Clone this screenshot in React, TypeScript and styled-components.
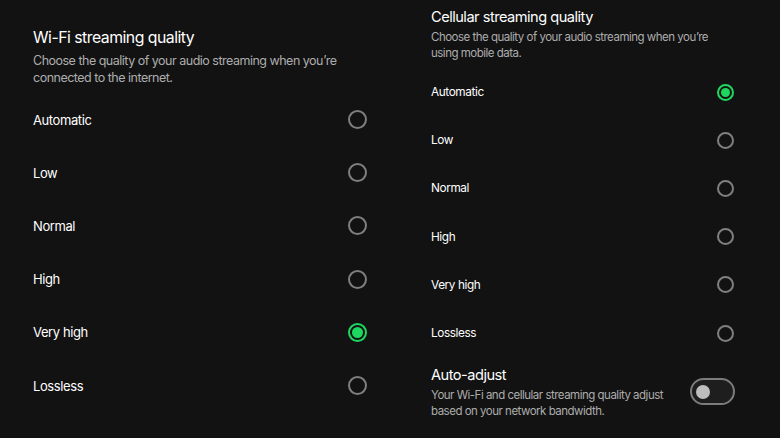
import React, { useState } from 'react';
import styled, { createGlobalStyle, css } from 'styled-components';

const GlobalStyle = createGlobalStyle`
  html, body {
    margin: 0;
    padding: 0;
    background: #121212;
  }
  body {
    font-family: Inter, "Noto Sans", sans-serif;
    color: #ffffff;
  }
`;

type Size = 'large' | 'small';

const qualityOptions = ['Automatic', 'Low', 'Normal', 'High', 'Very high', 'Lossless'];

const Page = styled.div`
  display: flex;
  width: 780px;
  height: 438px;
  overflow: hidden;
  background: #121212;
`;

const Column = styled.div<{ $size: Size }>`
  display: flex;
  flex-direction: column;
  ${(p) =>
    p.$size === 'large'
      ? css`
          width: 334px;
          padding: 28px 0 0 33px;
        `
      : css`
          width: 303px;
          padding: 8px 0 0 64px;
        `}
`;

const Title = styled.div<{ $size: Size }>`
  font-size: ${(p) => (p.$size === 'large' ? '15.8px' : '14.6px')};
  line-height: ${(p) => (p.$size === 'large' ? '20px' : '18px')};
  font-weight: 400;
  color: #ffffff;
  letter-spacing: -0.5px;
`;

const Desc = styled.div<{ $size: Size }>`
  font-size: ${(p) => (p.$size === 'large' ? '12.5px' : '11.5px')};
  line-height: ${(p) => (p.$size === 'large' ? '17px' : '16px')};
  color: #adadad;
  letter-spacing: -0.5px;
  margin-top: ${(p) => (p.$size === 'large' ? '4px' : '3px')};
`;

const List = styled.div`
  display: flex;
  flex-direction: column;
  margin-top: 7px;
`;

const Row = styled.label<{ $size: Size }>`
  display: flex;
  align-items: center;
  justify-content: space-between;
  height: ${(p) => (p.$size === 'large' ? '53.2px' : '48.2px')};
  cursor: pointer;
`;

const Label = styled.span<{ $size: Size }>`
  font-size: ${(p) => (p.$size === 'large' ? '13px' : '11.8px')};
  letter-spacing: -0.4px;
  color: #ffffff;
`;

const Radio = styled.span<{ $size: Size; $checked: boolean }>`
  box-sizing: border-box;
  flex-shrink: 0;
  width: ${(p) => (p.$size === 'large' ? '19px' : '17px')};
  height: ${(p) => (p.$size === 'large' ? '19px' : '17px')};
  border-radius: 50%;
  border: 2px solid ${(p) => (p.$checked ? '#1ed760' : '#7f7f7f')};
  display: flex;
  align-items: center;
  justify-content: center;
  &::after {
    content: '';
    display: ${(p) => (p.$checked ? 'block' : 'none')};
    width: ${(p) => (p.$size === 'large' ? '11px' : '9px')};
    height: ${(p) => (p.$size === 'large' ? '11px' : '9px')};
    border-radius: 50%;
    background: #1ed760;
  }
`;

const AutoRow = styled.div`
  display: flex;
  align-items: center;
  justify-content: space-between;
  margin-top: 9px;
`;

const AutoText = styled.div`
  display: flex;
  flex-direction: column;
  width: 250px;
`;

const Toggle = styled.button<{ $on: boolean }>`
  box-sizing: border-box;
  flex-shrink: 0;
  width: 45px;
  height: 27px;
  border-radius: 14px;
  border: 2px solid #7c7c7c;
  background: ${(p) => (p.$on ? '#1ed760' : '#1e1e1e')};
  padding: 0 4px;
  display: flex;
  align-items: center;
  justify-content: ${(p) => (p.$on ? 'flex-end' : 'flex-start')};
  cursor: pointer;
  margin-top: -2px;
  margin-right: -1px;
  &::after {
    content: '';
    width: 14px;
    height: 14px;
    border-radius: 50%;
    background: #bdbdbd;
  }
`;

type GroupProps = {
  size: Size;
  title: string;
  desc: string;
  value: string;
  onChange: (v: string) => void;
  children?: React.ReactNode;
};

const QualityGroup: React.FC<GroupProps> = ({ size, title, desc, value, onChange, children }) => (
  <Column $size={size}>
    <Title $size={size}>{title}</Title>
    <Desc $size={size}>{desc}</Desc>
    <List>
      {qualityOptions.map((opt) => (
        <Row key={opt} $size={size} onClick={() => onChange(opt)}>
          <Label $size={size}>{opt}</Label>
          <Radio $size={size} $checked={value === opt} />
        </Row>
      ))}
    </List>
    {children}
  </Column>
);

export default function App() {
  const [wifi, setWifi] = useState('Very high');
  const [cellular, setCellular] = useState('Automatic');
  const [auto, setAuto] = useState(false);

  return (
    <>
      <GlobalStyle />
      <Page>
        <QualityGroup
          size="large"
          title="Wi-Fi streaming quality"
          desc={"Choose the quality of your audio streaming when you\u2019re connected to the internet."}
          value={wifi}
          onChange={setWifi}
        />
        <QualityGroup
          size="small"
          title="Cellular streaming quality"
          desc={"Choose the quality of your audio streaming when you\u2019re using mobile data."}
          value={cellular}
          onChange={setCellular}
        >
          <AutoRow>
            <AutoText>
              <Title $size="small">Auto-adjust</Title>
              <Desc $size="small">
                Your Wi-Fi and cellular streaming quality adjust based on your network bandwidth.
              </Desc>
            </AutoText>
            <Toggle $on={auto} onClick={() => setAuto(!auto)} aria-label="Auto-adjust" />
          </AutoRow>
        </QualityGroup>
      </Page>
    </>
  );
}
